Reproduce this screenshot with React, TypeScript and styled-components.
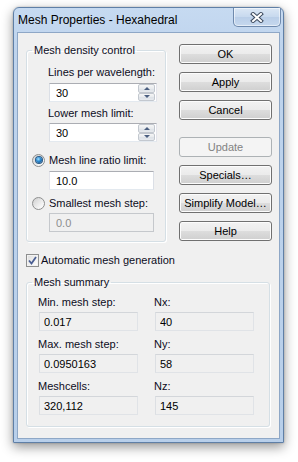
import styled, { createGlobalStyle } from "styled-components";

const GlobalStyle = createGlobalStyle`
  html, body { margin: 0; padding: 0; background: #ffffff; }
  body {
    font-family: "Liberation Sans", Arial, sans-serif;
    font-size: 11px;
    color: #0c0c1c;
  }
  * { box-sizing: border-box; }
`;

const Page = styled.div`
  width: 298px;
  height: 462px;
  padding: 7px 0 0 13px;
`;

const Window = styled.div`
  width: 271px;
  border: 1px solid #5f7fa6;
  border-radius: 6px 6px 0 0;
  background: linear-gradient(#c6daf1, #bfd4ed 40px, #b8cfea);
  box-shadow: 0 4px 12px rgba(0, 0, 0, 0.42), 0 0 2px rgba(0, 0, 0, 0.25);
`;

const TitleBar = styled.div`
  height: 24px;
  display: flex;
  align-items: flex-start;
  justify-content: space-between;
  padding-left: 4px;
`;

const Caption = styled.span`
  font-size: 12px;
  line-height: 25px;
  color: #000;
`;

const CloseButton = styled.div`
  width: 48px;
  height: 19px;
  margin-right: 2px;
  border: 1px solid #6f8aad;
  border-top: none;
  border-radius: 0 0 5px 5px;
  background: linear-gradient(#dbe7f5, #c7d9ee 50%, #b9cee8 51%, #c6d8ee);
  box-shadow: inset 0 0 0 1px rgba(255, 255, 255, 0.55);
  display: flex;
  align-items: center;
  justify-content: center;
`;

const Client = styled.div`
  margin: 0 3px 3px;
  border: 1px solid #8ea7c6;
  background: #f0f0f0;
  padding: 9px 7px 11px 8px;
  display: flex;
  flex-direction: column;
`;

const TopRow = styled.div`
  display: flex;
  align-items: flex-start;
  justify-content: space-between;
`;

const GroupBox = styled.fieldset<{ $width: number }>`
  margin: 0;
  padding: 0;
  min-width: 0;
  width: ${(p) => p.$width}px;
  border: 1px solid #d5dfe5;
  border-radius: 3px;
  box-shadow: inset 1px 1px 0 #ffffff, 1px 1px 0 #ffffff;
`;

const Legend = styled.legend`
  margin-left: 5px;
  padding: 0 2px;
  line-height: 16px;
  height: 16px;
`;

const DensityBody = styled.div`
  display: flex;
  flex-direction: column;
  padding: 6px 0 9px 0;
`;

const FieldLabel = styled.div<{ $indent?: number; $mt?: number }>`
  height: 16px;
  line-height: 16px;
  margin-left: ${(p) => p.$indent ?? 0}px;
  margin-top: ${(p) => p.$mt ?? 0}px;
  white-space: nowrap;
`;

const SpinBox = styled.div<{ $mt?: number }>`
  width: 108px;
  height: 19px;
  margin: ${(p) => p.$mt ?? 0}px 0 0 22px;
  border: 1px solid #abadb3;
  border-color: #abadb3 #e2e3ea #e3e9ef #dbdfe6;
  background: #ffffff;
  display: flex;
  align-items: center;
  padding-right: 1px;
`;

const SpinValue = styled.input`
  flex: 1;
  min-width: 0;
  height: 17px;
  border: none;
  outline: none;
  background: transparent;
  padding: 0 0 0 6px;
  font: inherit;
  color: #000;
`;

const SpinButtons = styled.div`
  width: 17px;
  height: 17px;
  display: flex;
  flex-direction: column;
`;

const SpinButton = styled.div`
  flex: 1;
  border: 1px solid #c3c8cf;
  border-radius: 2px;
  background: linear-gradient(#f6f6f6, #e8ebee 50%, #dde2e7 51%, #e7eaee);
  display: flex;
  align-items: center;
  justify-content: center;
`;

const Arrow = styled.span<{ $down?: boolean }>`
  width: 0;
  height: 0;
  border-left: 3px solid transparent;
  border-right: 3px solid transparent;
  ${(p) =>
    p.$down
      ? "border-top: 3px solid #4b5f80;"
      : "border-bottom: 3px solid #4b5f80;"}
`;

const TextField = styled.input<{ $width: number; $mt?: number; $ml?: number }>`
  width: ${(p) => p.$width}px;
  height: 19px;
  margin: ${(p) => p.$mt ?? 0}px 0 0 ${(p) => p.$ml ?? 0}px;
  border: 1px solid;
  border-color: #abadb3 #dbdfe6 #e3e9ef #e2e3ea;
  background: #ffffff;
  padding: 0 0 0 6px;
  font: inherit;
  color: #000;
  outline: none;

  &:read-only {
    background: #f0f0f0;
    border-color: #d3d6da #e0e3e7 #e0e3e7 #dcdfe3;
    padding-left: 4px;
  }

  &:disabled {
    background: #f0f0f0;
    border-color: #c5c8cc;
    color: #8d8d8d;
    padding-left: 6px;
  }
`;

const OptionRow = styled.label<{ $mt?: number }>`
  height: 16px;
  margin: ${(p) => p.$mt ?? 0}px 0 0 5px;
  display: flex;
  align-items: center;
  gap: 4px;
  white-space: nowrap;
`;

const RadioMark = styled.span<{ $checked?: boolean }>`
  width: 13px;
  height: 13px;
  border-radius: 50%;
  border: 1px solid #8e8f8f;
  background: linear-gradient(135deg, #cfcfcf, #f4f4f4 70%, #ffffff);
  display: flex;
  align-items: center;
  justify-content: center;

  &::after {
    content: "";
    display: ${(p) => (p.$checked ? "block" : "none")};
    width: 6px;
    height: 6px;
    border-radius: 50%;
    background: radial-gradient(circle at 40% 35%, #a8e4ff 0, #2f8fd6 40%, #0d3f75 95%);
    box-shadow: 0 0 0 1px #2a5a87;
  }
`;

const ButtonColumn = styled.div`
  width: 93px;
  margin-top: 2px;
  display: flex;
  flex-direction: column;
  gap: 8px;
`;

const PushButton = styled.button<{ $mt?: number }>`
  height: 20px;
  width: 93px;
  margin-top: ${(p) => p.$mt ?? 0}px;
  padding: 0;
  border: 1px solid #707070;
  border-radius: 3px;
  background: linear-gradient(#f2f2f2 0%, #ebebeb 50%, #dddddd 51%, #cfcfcf 100%);
  box-shadow: inset 0 0 0 1px #fcfcfc;
  font: inherit;
  color: #000;
  white-space: nowrap;

  &:disabled {
    border-color: #adb2b5;
    background: #f4f4f4;
    box-shadow: none;
    color: #838383;
  }
`;

const CheckRow = styled.label`
  height: 16px;
  margin-top: 10px;
  display: flex;
  align-items: center;
  gap: 2px;
`;

const CheckMark = styled.span`
  width: 13px;
  height: 13px;
  border: 1px solid #8e8f8f;
  background: linear-gradient(135deg, #dcdcdc, #f6f6f6 70%, #ffffff);
  box-shadow: inset 0 0 0 1px #f2f2f2;
  display: flex;
  align-items: center;
  justify-content: center;
`;

const SummaryBox = styled(GroupBox)`
  margin-top: 6px;
`;

const SummaryGrid = styled.div`
  display: grid;
  grid-template-columns: 100px 100px;
  column-gap: 16px;
  row-gap: 5px;
  padding: 4px 0 11px 11px;
`;

const SummaryCell = styled.div`
  display: flex;
  flex-direction: column;
  gap: 2px;
`;

function Spin({ value, mt }: { value: string; mt?: number }) {
  return (
    <SpinBox $mt={mt}>
      <SpinValue value={value} onChange={() => {}} />
      <SpinButtons>
        <SpinButton>
          <Arrow />
        </SpinButton>
        <SpinButton>
          <Arrow $down />
        </SpinButton>
      </SpinButtons>
    </SpinBox>
  );
}

const summary = [
  ["Min. mesh step:", "0.017", "Nx:", "40"],
  ["Max. mesh step:", "0.0950163", "Ny:", "58"],
  ["Meshcells:", "320,112", "Nz:", "145"],
];

export default function App() {
  return (
    <Page>
      <GlobalStyle />
      <Window>
        <TitleBar>
          <Caption>Mesh Properties - Hexahedral</Caption>
          <CloseButton>
            <svg width="14" height="11" viewBox="0 0 14 11">
              <path d="M3 2 L11 9 M11 2 L3 9" stroke="#3d4b5f" strokeWidth="4" strokeLinecap="square" />
              <path d="M3 2 L11 9 M11 2 L3 9" stroke="#ffffff" strokeWidth="2" strokeLinecap="square" />
            </svg>
          </CloseButton>
        </TitleBar>
        <Client>
          <TopRow>
            <GroupBox $width={140}>
              <Legend>Mesh density control</Legend>
              <DensityBody>
                <FieldLabel $indent={21}>Lines per wavelength:</FieldLabel>
                <Spin value="30" mt={3} />
                <FieldLabel $indent={21} $mt={3}>Lower mesh limit:</FieldLabel>
                <Spin value="30" mt={2} />
                <OptionRow $mt={10}>
                  <RadioMark $checked />
                  Mesh line ratio limit:
                </OptionRow>
                <TextField $width={105} $ml={22} $mt={3} value="10.0" onChange={() => {}} />
                <OptionRow $mt={5}>
                  <RadioMark />
                  Smallest mesh step:
                </OptionRow>
                <TextField $width={105} $ml={22} $mt={2} value="0.0" disabled />
              </DensityBody>
            </GroupBox>
            <ButtonColumn>
              <PushButton>OK</PushButton>
              <PushButton>Apply</PushButton>
              <PushButton>Cancel</PushButton>
              <PushButton $mt={9} disabled>
                Update
              </PushButton>
              <PushButton>Specials…</PushButton>
              <PushButton>Simplify Model…</PushButton>
              <PushButton>Help</PushButton>
            </ButtonColumn>
          </TopRow>
          <CheckRow>
            <CheckMark>
              <svg width="9" height="9" viewBox="0 0 9 9">
                <path d="M1 4.5 L3.5 7.5 L8 1" fill="none" stroke="#4a5e93" strokeWidth="1.8" />
              </svg>
            </CheckMark>
            Automatic mesh generation
          </CheckRow>
          <SummaryBox $width={244}>
            <Legend>Mesh summary</Legend>
            <SummaryGrid>
              {summary.map(([l1, v1, l2, v2]) => [
                <SummaryCell key={l1}>
                  <FieldLabel>{l1}</FieldLabel>
                  <TextField $width={99} $ml={1} value={v1} readOnly />
                </SummaryCell>,
                <SummaryCell key={l2}>
                  <FieldLabel>{l2}</FieldLabel>
                  <TextField $width={99} $ml={1} value={v2} readOnly />
                </SummaryCell>,
              ])}
            </SummaryGrid>
          </SummaryBox>
        </Client>
      </Window>
    </Page>
  );
}
